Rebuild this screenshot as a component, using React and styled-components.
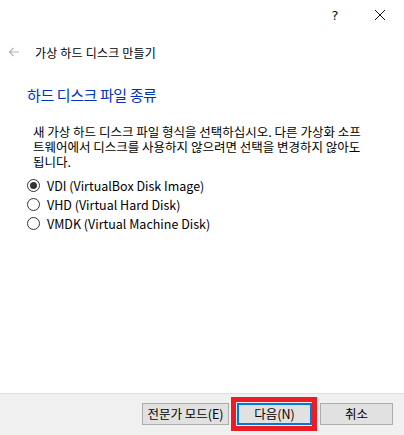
import React from "react";
import styled, { createGlobalStyle } from "styled-components";

const Global = createGlobalStyle`
  html, body { margin: 0; padding: 0; background: #ffffff; }
  body {
    font-family: "Noto Sans CJK KR", "Noto Sans", sans-serif;
    color: #000;
  }
`;

const Window = styled.div`
  width: 404px;
  height: 435px;
  display: flex;
  flex-direction: column;
  background: #fff;
  overflow: hidden;
`;

const TitleBar = styled.div`
  height: 30px;
  display: flex;
  justify-content: flex-end;
  align-items: center;
  padding-right: 18px;
  gap: 33px;
`;

const TitleIcon = styled.span`
  font-size: ${(p) => p.$size || 13}px;
  line-height: 1;
  color: #111;
  font-family: "DejaVu Sans", sans-serif;
  width: 12px;
  text-align: center;
`;

const Header = styled.div`
  display: flex;
  align-items: center;
  height: 20px;
  margin-top: 12px;
  padding-left: 8px;
  gap: 15px;
  font-size: 12px;
  letter-spacing: 0.2px;
`;

const Content = styled.div`
  padding: 0 0 0 27px;
  margin-top: 23px;
`;

const Heading = styled.h1`
  margin: 0;
  font-size: 15px;
  font-weight: 400;
  color: #0033bc;
  line-height: 20px;
  letter-spacing: -0.4px;
`;

const Paragraph = styled.p`
  margin: 19px 0 0 6px;
  font-size: 12.5px;
  line-height: 15px;
  width: 360px;
`;

const Options = styled.div`
  display: flex;
  flex-direction: column;
  gap: 4px;
  margin-top: 9px;
`;

const Option = styled.label`
  display: flex;
  align-items: center;
  height: 15px;
  gap: 7px;
  font-size: 12.5px;
  line-height: 15px;
`;

const RadioCircle = styled.span`
  width: 11px;
  height: 11px;
  border: 1px solid #333;
  border-radius: 50%;
  display: flex;
  align-items: center;
  justify-content: center;
  background: #fff;
  &::after {
    content: "";
    width: 7px;
    height: 7px;
    border-radius: 50%;
    background: ${(p) => (p.$checked ? "#333" : "transparent")};
  }
`;

const Footer = styled.div`
  margin-top: auto;
  height: 42px;
  background: #f0f0f0;
  border-top: 1px solid #dfdfdf;
  display: flex;
  justify-content: flex-end;
  align-items: flex-start;
  padding: 9px 11px 0 0;
  gap: 8px;
  box-sizing: border-box;
`;

const ButtonWrap = styled.div`
  position: relative;
`;

const Highlight = styled.div`
  position: absolute;
  left: -6px;
  right: -5px;
  top: -6px;
  bottom: -6px;
  border: 5px solid #ed1c24;
  pointer-events: none;
`;

const Button = styled.button`
  width: ${(p) => p.$w}px;
  height: 22px;
  box-sizing: border-box;
  background: #e1e1e1;
  border: ${(p) => (p.$default ? "2px solid #0078d7" : "1px solid #adadad")};
  font-family: "Noto Sans CJK KR", "Noto Sans", sans-serif;
  font-size: 12.5px;
  color: #000;
  padding: 0;
  line-height: 18px;
  display: flex;
  align-items: center;
  justify-content: center;
`;

const ArrowIcon = () => (
  <svg width="12" height="10" viewBox="0 0 12 10">
    <path d="M11 5H1.5M5.5 1L1.5 5l4 4" fill="none" stroke="#b4b4b4" strokeWidth="1.2" />
  </svg>
);

const options = [
  { label: "VDI (VirtualBox Disk Image)", checked: true },
  { label: "VHD (Virtual Hard Disk)" },
  { label: "VMDK (Virtual Machine Disk)" },
];

export default function App() {
  return (
    <Window>
      <Global />
      <TitleBar>
        <TitleIcon $size={13}>?</TitleIcon>
        <svg width="12" height="12" viewBox="0 0 12 12">
          <path d="M1 1l10 10M11 1L1 11" stroke="#111" strokeWidth="1" fill="none" />
        </svg>
      </TitleBar>
      <Header>
        <ArrowIcon />
        <span>가상 하드 디스크 만들기</span>
      </Header>
      <Content>
        <Heading>하드 디스크 파일 종류</Heading>
        <Paragraph>
          새 가상 하드 디스크 파일 형식을 선택하십시오. 다른 가상화 소프
          <br />
          트웨어에서 디스크를 사용하지 않으려면 선택을 변경하지 않아도
          <br />
          됩니다.
        </Paragraph>
        <Options>
          {options.map((o) => (
            <Option key={o.label}>
              <RadioCircle $checked={o.checked} />
              <span>{o.label}</span>
            </Option>
          ))}
        </Options>
      </Content>
      <Footer>
        <Button $w={87}>전문가 모드(E)</Button>
        <ButtonWrap>
          <Button $w={75} $default>다음(N)</Button>
          <Highlight />
        </ButtonWrap>
        <Button $w={73}>취소</Button>
      </Footer>
    </Window>
  );
}
